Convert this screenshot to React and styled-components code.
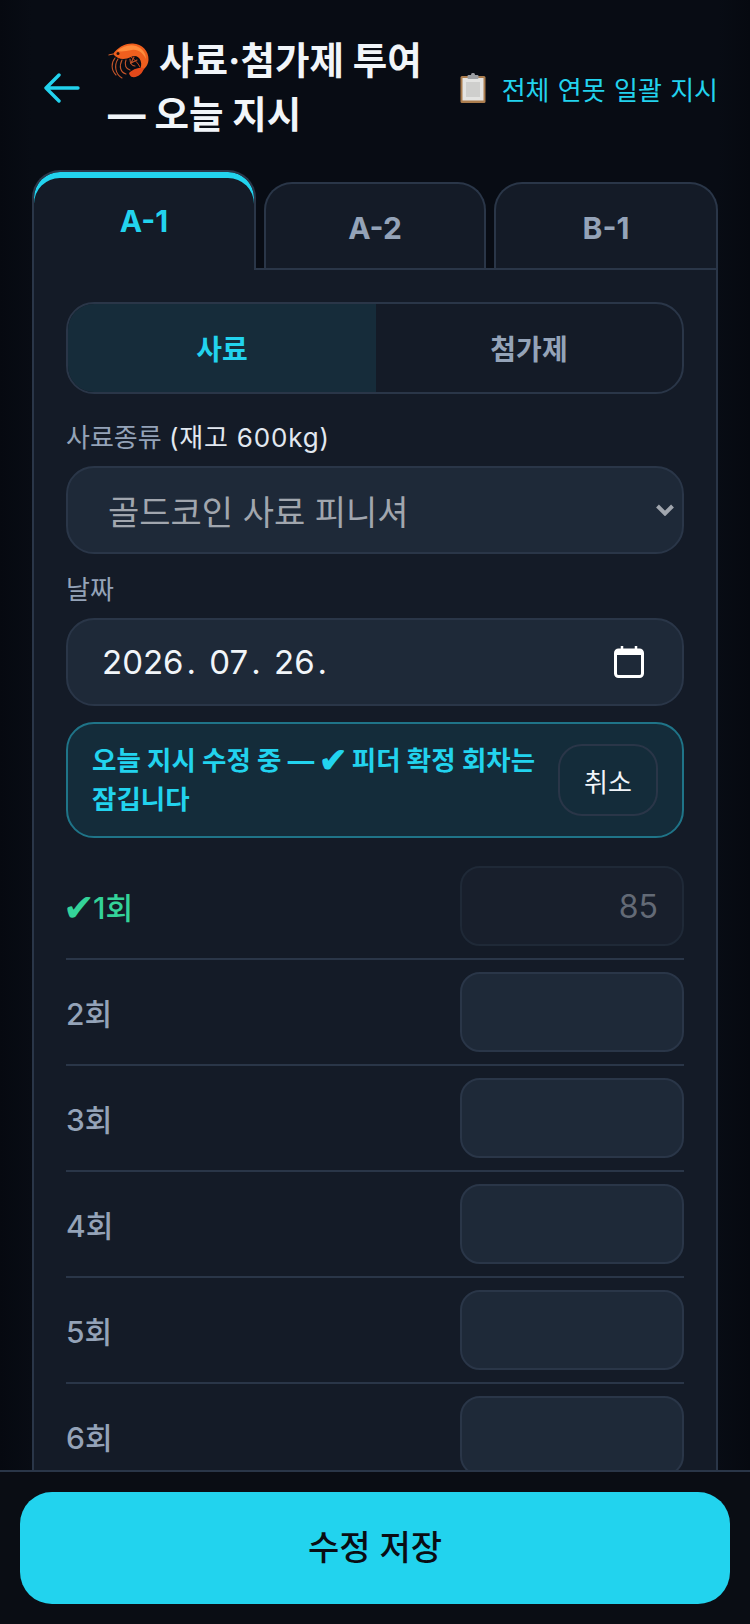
import React from "react";
import styled, { createGlobalStyle } from "styled-components";

const GlobalStyle = createGlobalStyle`
  html, body {
    margin: 0;
    padding: 0;
    background: #080c14;
  }
  * {
    box-sizing: border-box;
  }
`;

const FONT = `Inter, "Noto Sans CJK KR", "Noto Sans", sans-serif`;

const Screen = styled.div`
  width: 750px;
  height: 1624px;
  overflow: hidden;
  display: flex;
  flex-direction: column;
  font-family: ${FONT};
  background: linear-gradient(90deg, #060910 0, #080c14 32px, #080c14 718px, #060910 750px);
`;

const Header = styled.header`
  height: 170px;
  flex: none;
  display: flex;
  align-items: flex-start;
  padding: 34px 32px 0 44px;
`;

const BackButton = styled.button`
  width: 36px;
  height: 36px;
  margin-top: 37px;
  padding: 0;
  flex: none;
  border: none;
  background: none;
  color: #22d3ee;
`;

const Title = styled.h1`
  width: 330px;
  margin: 0 0 0 28px;
  font-size: 37.5px;
  line-height: 54px;
  font-weight: 700;
  color: #f1f5f9;
`;

const BulkLink = styled.a`
  margin: 34px 0 0 auto;
  height: 40px;
  display: flex;
  align-items: center;
  gap: 16px;
  font-size: 26px;
  word-spacing: 1px;
  color: #22d3ee;
  white-space: nowrap;
`;

const Content = styled.main`
  flex: 1;
  min-height: 0;
  padding: 0 32px;
  overflow: hidden;
`;

const Tabs = styled.div`
  display: flex;
  align-items: flex-end;
  gap: 8px;
  height: 98px;
`;

const Tab = styled.button`
  flex: 1;
  padding: 0;
  height: ${(p) => (p.$active ? "100px" : "86px")};
  margin-bottom: ${(p) => (p.$active ? "-2px" : "0")};
  position: relative;
  z-index: ${(p) => (p.$active ? 1 : 0)};
  background: #141b27;
  border: 2px solid #2a3648;
  border-bottom: none;
  border-radius: 28px 28px 0 0;
  box-shadow: ${(p) => (p.$active ? "inset 0 6px 0 #22d3ee" : "none")};
  font-family: ${FONT};
  font-size: 30px;
  font-weight: 700;
  color: ${(p) => (p.$active ? "#22d3ee" : "#94a3b8")};
  display: flex;
  align-items: flex-start;
  justify-content: center;
  line-height: ${(p) => (p.$active ? "98px" : "88px")};

  &:nth-child(2) {
    flex: 0 0 222px;
  }
`;

const Panel = styled.section`
  background: #141b27;
  border: 2px solid #2a3648;
  padding: 32px 32px 0;
  height: 1300px;
`;

const Segment = styled.div`
  display: flex;
  height: 92px;
  border: 2px solid #2a3648;
  border-radius: 28px;
  overflow: hidden;
`;

const SegmentItem = styled.button`
  flex: ${(p) => (p.$active ? "0 0 308px" : "1")};
  border: none;
  padding: 0;
  font-family: ${FONT};
  font-size: 28px;
  font-weight: 700;
  background: ${(p) => (p.$active ? "#162c3a" : "transparent")};
  color: ${(p) => (p.$active ? "#22d3ee" : "#94a3b8")};
`;

const FieldLabel = styled.div`
  margin-top: ${(p) => p.$top}px;
  margin-bottom: ${(p) => p.$bottom}px;
  height: 36px;
  font-size: 26px;
  line-height: 36px;
  color: #94a3b8;
`;

const Bright = styled.span`
  color: #e2e8f0;
  letter-spacing: 0.8px;
`;

const FieldBox = styled.div`
  height: 88px;
  background: #1e2938;
  border: 2px solid #2a3648;
  border-radius: 28px;
  display: flex;
  align-items: center;
  justify-content: space-between;
  font-size: ${(p) => p.$size}px;
  padding: ${(p) => p.$padding};
  color: ${(p) => p.$color};
`;

const DateDot = styled.span`
  margin: 0 4px 0 3px;
`;

const Notice = styled.div`
  margin-top: 16px;
  height: 116px;
  background: #142c3a;
  border: 2px solid #1f7488;
  border-radius: 28px;
  padding: 0 24px 0 24px;
  display: flex;
  align-items: center;
  justify-content: space-between;
  gap: 16px;
`;

const NoticeText = styled.div`
  width: 450px;
  font-size: 26.5px;
  line-height: 39px;
  font-weight: 700;
  color: #22d3ee;
`;

const Check = styled.span`
  font-size: ${(p) => p.$size}px;
  line-height: 0;
  vertical-align: -2px;
  margin: ${(p) => p.$margin};
`;

const CancelButton = styled.button`
  width: 100px;
  height: 72px;
  flex: none;
  background: transparent;
  border: 2px solid #2a3648;
  border-radius: 24px;
  font-family: ${FONT};
  font-size: 26px;
  color: #f1f5f9;
`;

const Rows = styled.div`
  margin-top: 16px;
`;

const Row = styled.div`
  display: flex;
  align-items: center;
  justify-content: space-between;
  padding: 12px 0;
  border-bottom: 2px solid #2a3648;
`;

const RowLabel = styled.div`
  font-size: 30px;
  font-weight: 550;
  color: ${(p) => (p.$done ? "#34d399" : "#94a3b8")};
`;

const AmountBox = styled.div`
  width: 224px;
  height: 80px;
  border-radius: 20px;
  border: 2px solid ${(p) => (p.$locked ? "#1f2937" : "#2a3648")};
  background: ${(p) => (p.$locked ? "#181f2c" : "#1e2938")};
  display: flex;
  align-items: center;
  justify-content: flex-end;
  padding: 0 24px;
  font-size: 32px;
  color: #636a76;
`;

const Footer = styled.footer`
  height: 154px;
  flex: none;
  position: relative;
  z-index: 2;
  background: #0a0d14;
  border-top: 2px solid #2a3648;
  padding: 20px 20px;
`;

const SaveButton = styled.button`
  width: 100%;
  height: 112px;
  border: none;
  border-radius: 32px;
  background: #22d3ee;
  color: #0a0d14;
  font-family: ${FONT};
  font-size: 34px;
  font-weight: 500;
  padding: 0 0 6px;
`;

const EmojiSvg = styled.svg`
  display: inline-block;
  vertical-align: ${(p) => p.$align || "-4px"};
  flex: none;
`;

const Shrimp = () => (
  <EmojiSvg width="42" height="38" viewBox="3 3 42 38" $align="-6px">
    <g fill="none" stroke="#c4552a" strokeWidth="1.1" strokeLinecap="round">
      <path d="M10 19C6 24 6 31 11 36" />
      <path d="M13 20C9 26 10 35 17 39" />
      <path d="M17 21C14 27 15 33 21 35" />
      <path d="M21 21C19 26 21 30 25 31" />
      <path d="M25 20C25 24 27 27 30 27" />
      <path d="M29 18 26 24 32 21" />
    </g>
    <path d="M8 15C12 9 20 4 28 4.5 37 5 44 12 43.5 21 43 27 39 31 34 33 36 29 37 25 35.5 21.5 34 17.5 30 16 26 18 20 21 13 21 8 15Z" fill="#ef5f1e" />
    <path d="M12 12C18 7 25 5 31 7 37 9 41 14 41 20 38 14 33 10 27 11 21 12 17 13 12 12Z" fill="#ff8c3c" />
    <path d="M24 34C27 31 33 28 39 29 38 34 33 39 27 38 25.500 37.500 24.500 36 24 34Z" fill="#e2491a" />
    <path d="M26 18C29 20 33 24 35 28" fill="none" stroke="#c9481a" strokeWidth="1" />
    <circle cx="13" cy="14.500" r="1.500" fill="#2a120a" />
    <path d="M8 15 3.500 16" stroke="#d9622a" strokeWidth="1" />
  </EmojiSvg>
);

const Clipboard = () => (
  <EmojiSvg width="26" height="30" viewBox="0 0 26 30">
    <rect x="0.500" y="3" width="25" height="27" rx="1.500" fill="#ab7d4e" />
    <rect x="2.500" y="5" width="21" height="22.500" fill="#e4e4e2" />
    <rect x="6" y="9" width="14" height="15" fill="#cfcfcd" />
    <rect x="7.500" y="2" width="11" height="4" rx="1" fill="#9c9fa3" />
    <rect x="11" y="0" width="4" height="3" rx="1.500" fill="#9c9fa3" />
  </EmojiSvg>
);

const ROUNDS = ["2회", "3회", "4회", "5회", "6회"];

export default function App() {
  return (
    <>
      <GlobalStyle />
      <Screen>
        <Header>
          <BackButton aria-label="뒤로">
            <svg width="36" height="30" viewBox="0 0 36 30" fill="none" stroke="currentColor" strokeWidth="3.4" strokeLinecap="round" strokeLinejoin="round">
              <path d="M34 15H2M15 2 2 15l13 13" />
            </svg>
          </BackButton>
          <Title>
            <Shrimp /> 사료·첨가제 투여 — 오늘 지시
          </Title>
          <BulkLink>
            <Clipboard />
            전체 연못 일괄 지시
          </BulkLink>
        </Header>
        <Content>
          <Tabs>
            <Tab $active>A-1</Tab>
            <Tab>A-2</Tab>
            <Tab>B-1</Tab>
          </Tabs>
          <Panel>
            <Segment>
              <SegmentItem $active>사료</SegmentItem>
              <SegmentItem>첨가제</SegmentItem>
            </Segment>
            <FieldLabel $top={26} $bottom={10}>
              사료종류 <Bright>(재고 600kg)</Bright>
            </FieldLabel>
            <FieldBox $size={34} $padding="0 8px 0 40px" $color="#a1a6ae">
              골드코인 사료 피니셔
              <svg width="18" height="12" viewBox="0 0 18 12" fill="none" stroke="#a1a6ae" strokeWidth="4">
                <path d="M1.500 2 9 9.500 16.500 2" />
              </svg>
            </FieldBox>
            <FieldLabel $top={18} $bottom={10}>날짜</FieldLabel>
            <FieldBox $size={33} $padding="0 38px 0 34px" $color="#f1f5f9">
              <span>
                2026<DateDot>.</DateDot> 07<DateDot>.</DateDot> 26<DateDot>.</DateDot>
              </span>
              <svg width="30" height="32" viewBox="0 0 30 32" fill="none">
                <path d="M8 0v5M22 0v5" stroke="#fff" strokeWidth="2.500" />
                <rect x="1.500" y="4" width="27" height="26.500" rx="3" stroke="#fff" strokeWidth="3" />
                <rect x="1.500" y="4" width="27" height="5" fill="#fff" />
              </svg>
            </FieldBox>
            <Notice>
              <NoticeText>
                오늘 지시 수정 중 — <Check $size={34} $margin="0 -1px 0 -2px">✔</Check> 피더 확정 회차는
                <br />
                잠깁니다
              </NoticeText>
              <CancelButton>취소</CancelButton>
            </Notice>
            <Rows>
              <Row>
                <RowLabel $done><Check $size={38} $margin="0 -2px 0 -3px">✔</Check>1회</RowLabel>
                <AmountBox $locked>85</AmountBox>
              </Row>
              {ROUNDS.map((round) => (
                <Row key={round}>
                  <RowLabel>{round}</RowLabel>
                  <AmountBox />
                </Row>
              ))}
            </Rows>
          </Panel>
        </Content>
        <Footer>
          <SaveButton>수정 저장</SaveButton>
        </Footer>
      </Screen>
    </>
  );
}
